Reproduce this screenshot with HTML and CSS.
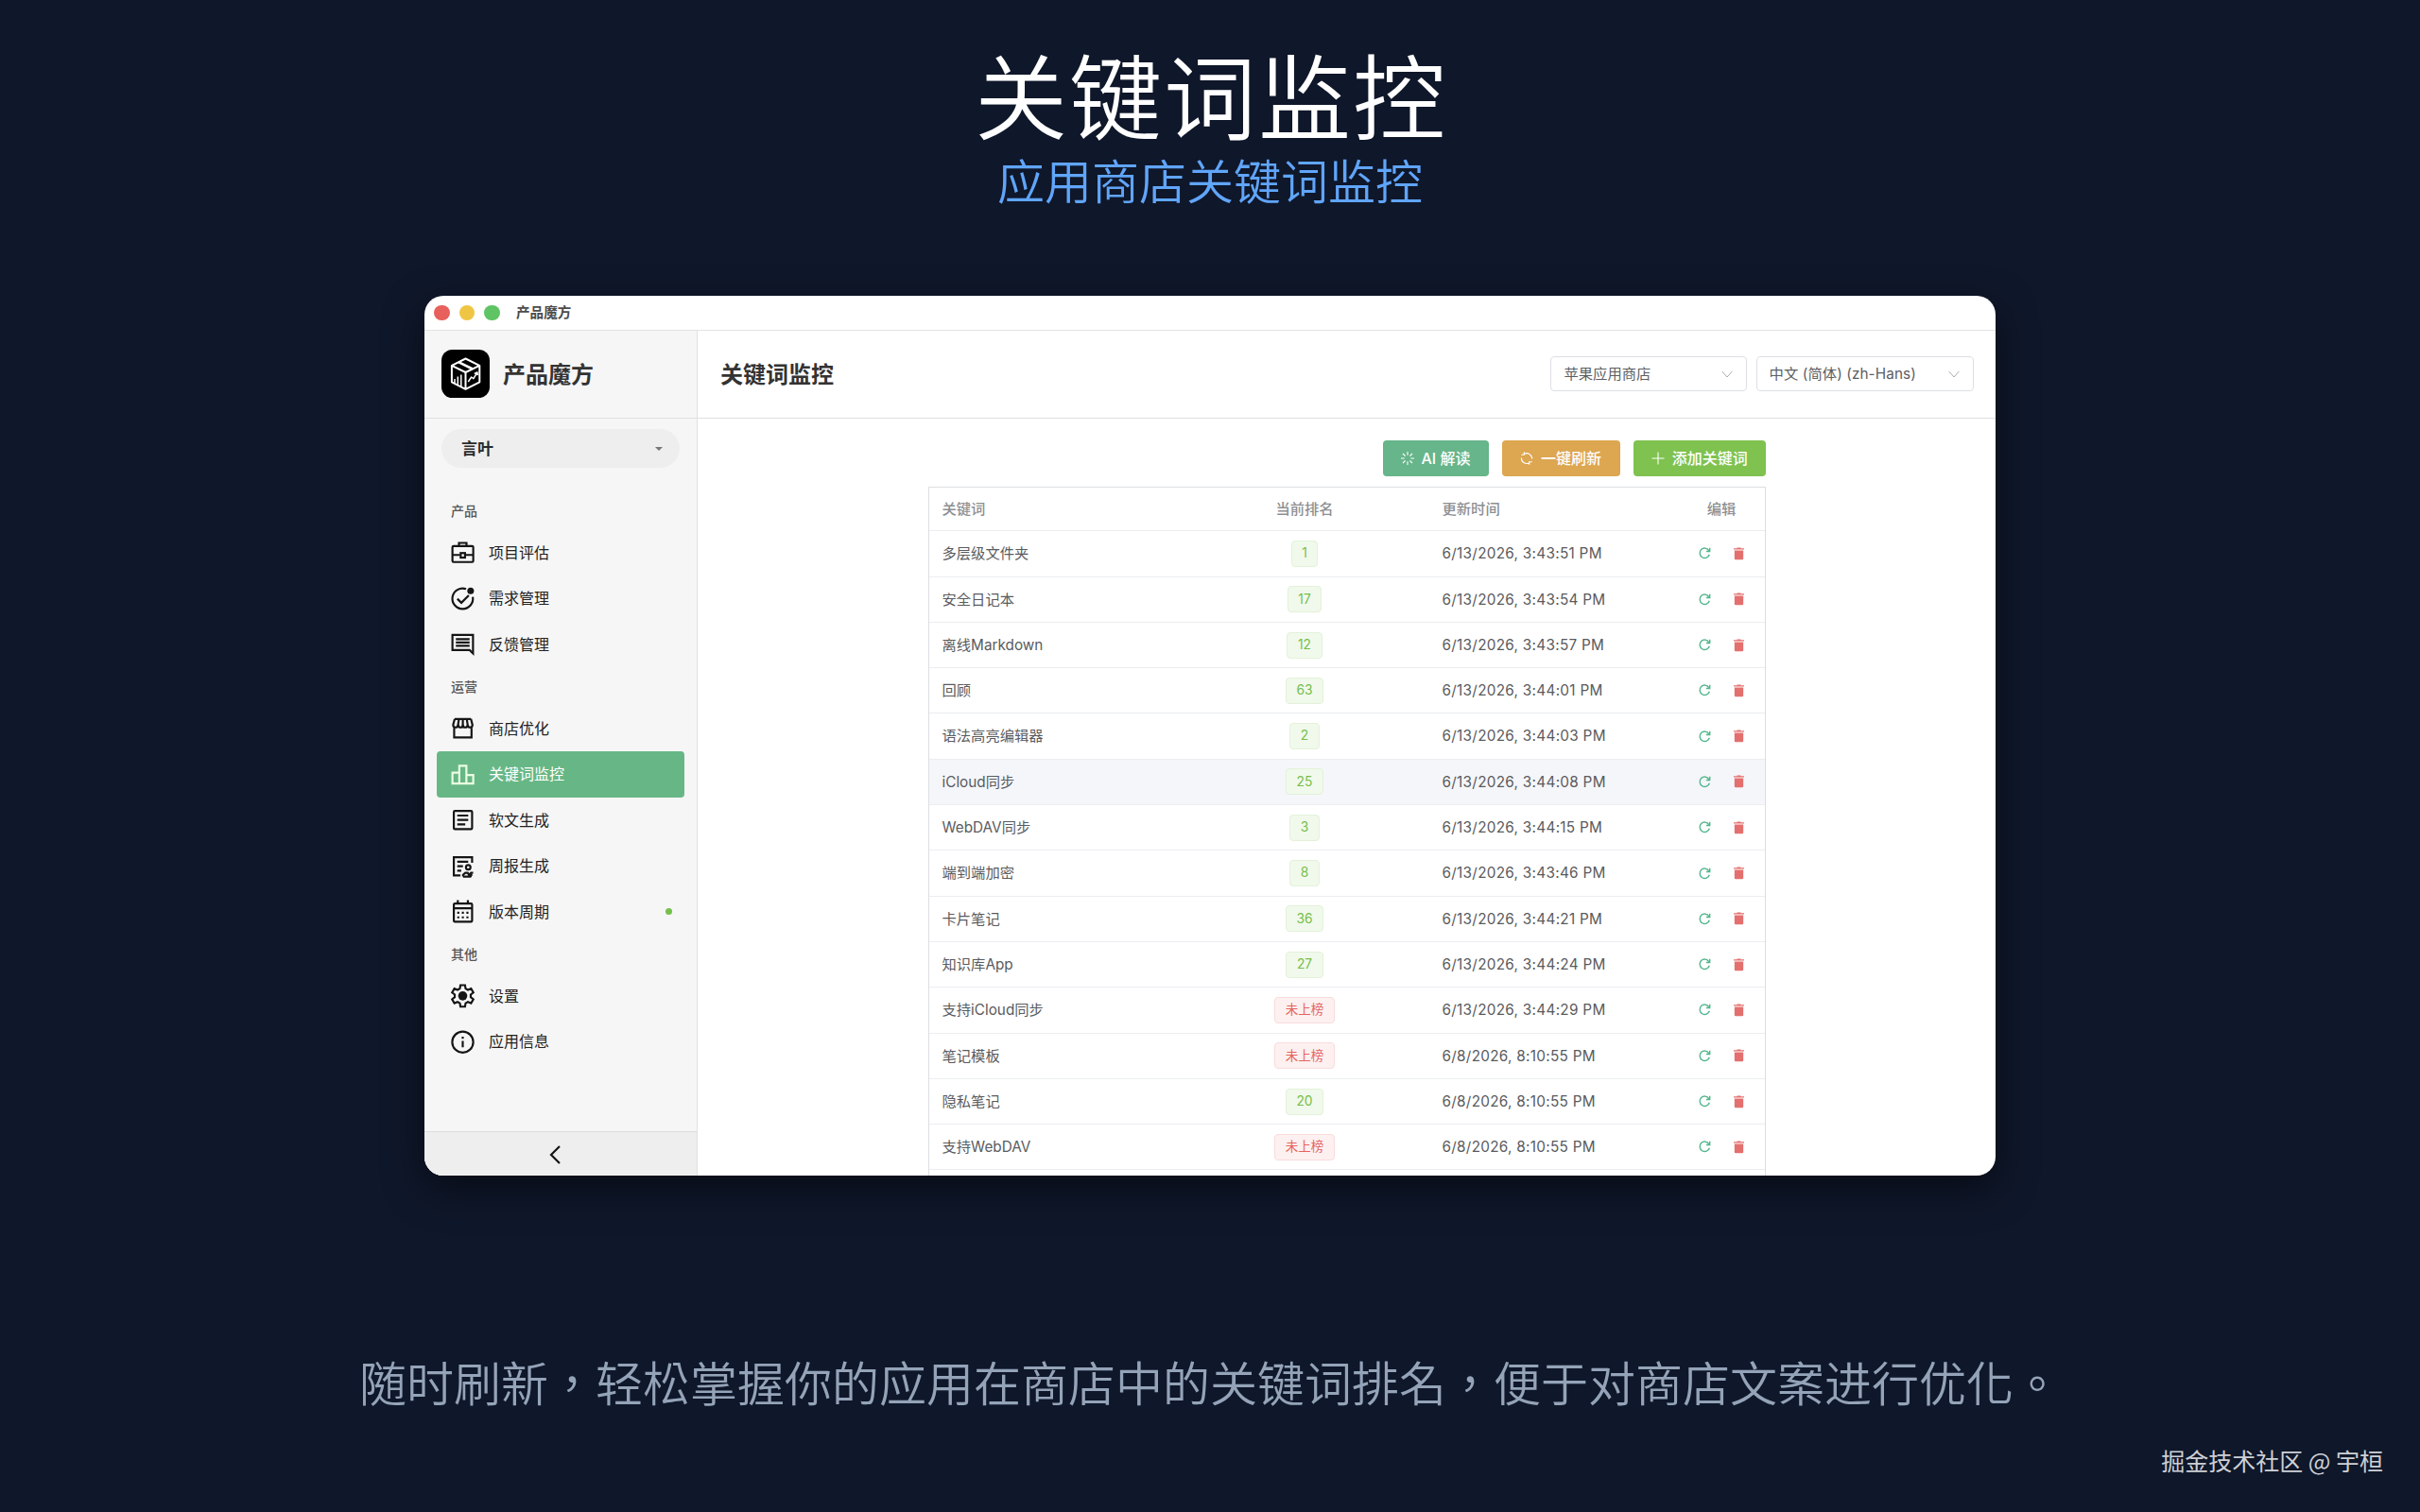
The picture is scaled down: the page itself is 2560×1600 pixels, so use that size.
FILE: index.html
```html
<!DOCTYPE html>
<html lang="zh-CN">
<head>
<meta charset="utf-8">
<title>关键词监控</title>
<link rel="stylesheet" href="styles.css">
</head>
<body>
<svg class="defs" aria-hidden="true">
  <symbol id="refresh" viewBox="0 0 14 14"><path d="M12.2 8.3A5.6 5.6 0 1 1 11.6 3.8M12.6 .9V4.9H8.6" fill="none" stroke="currentColor" stroke-width="1.5"/></symbol>
  <symbol id="trash" viewBox="0 0 12 15"><path d="M3.8 .4h4.4v.9H12v1.3H0V1.3h3.8z"/><path d="M.9 3.6h10.2v9.4a1.3 1.3 0 0 1-1.3 1.3H2.2A1.3 1.3 0 0 1 .9 13z"/></symbol>
  <symbol id="down" viewBox="0 0 12 8"><path d="M.7 1 6 7l5.3-6" fill="none" stroke="currentColor"/></symbol>
</svg>
<main class="page">
  <header class="hero">
    <h1>关键词监控</h1>
    <h2>应用商店关键词监控</h2>
  </header>

  <section class="window">
    <div class="titlebar"><i class="dot red"></i><i class="dot yellow"></i><i class="dot green"></i><span>产品魔方</span></div>
    <div class="body">
      <aside class="sidebar">
        <div class="brand">
          <svg class="logo" viewBox="0 0 51 51"><rect width="51" height="51" rx="11.5"/><g fill="none" stroke="#fff" stroke-width="2" stroke-linejoin="round"><path d="M25.5 9.5 40.3 16.8V34.3L25.5 41.8 10.9 34.3V16.8zM10.9 16.8 25.5 24 40.3 16.8M25.5 24V41.8"/><path d="M18 13.2 33 20.5" stroke-width="2.6"/><path d="M14 35.5V31M17.3 37.3V28.5M20.8 39V26.5M28.3 34l3.4-5 2.2 1.6 3.8-6.3M34.8 25.4l3.1-1.5.4 3.2" stroke-width="1.5"/></g></svg>
          <strong>产品魔方</strong>
        </div>
        <div class="picker"><span>言叶</span><i class="caret"></i></div>
        <nav>
          <p class="label">产品</p>
          <a class="item"><svg viewBox="0 0 24 24"><rect x="3" y="6.5" width="18.2" height="14" rx="1"/><path d="M8.7 6V3.7h6.6V6M3 14.3h6.5M14.5 14.3h6.5"/><rect x="10.2" y="12.6" width="3.8" height="4"/></svg>项目评估</a>
          <a class="item"><svg viewBox="0 0 24 24"><path d="M14.9 3.5A9 9 0 1 0 20.8 10.5M7.3 12.1l3.5 3.5 6.5-6.5"/><circle class="solid" cx="18.9" cy="5.2" r="2.9"/></svg>需求管理</a>
          <a class="item"><svg viewBox="0 0 24 24"><path d="M3 4h18v16.2L18 17.3H3zM6 7.8h12M6 10.7h12M6 13.6h12"/></svg>反馈管理</a>
          <p class="label">运营</p>
          <a class="item"><svg viewBox="0 0 24 24"><path d="M4.5 12v8.2h15.2V12M5 4h14.2M5 4 3.6 9c0 3.2 4 3.2 4.3 0L8.7 4M8 9c.3 3.2 4 3.2 4.1 0V4M12.1 9c.2 3.2 3.9 3.2 4.2 0L15.5 4M16.3 9c.3 3.2 4.2 3.2 4.2 0L19.2 4"/></svg>商店优化</a>
          <a class="item active"><svg viewBox="0 0 24 24"><path d="M9 20H3v-9.5h6M15.2 12.5h6V20h-6M9 20V4.5h6.2V20z"/></svg>关键词监控</a>
          <a class="item"><svg viewBox="0 0 24 24"><rect x="4.2" y="4.2" width="16" height="16" rx="1"/><path d="M7.2 8.3h9.6M7.2 12.1h9.6M7.2 16h7"/></svg>软文生成</a>
          <a class="item"><svg viewBox="0 0 24 24"><path d="M10 20.1H4.2V4.2h16v4.8M7.2 8.2h9.6M7.2 12.1h5M7.2 16h3.5"/><circle cx="16.8" cy="13" r="2"/><path d="M12.3 21.2v-1.6l2-1.7h2l1.2 1.8 1.8-1.8h1.8M12.3 21.2h6.4l1.3-2"/></svg>周报生成</a>
          <a class="item"><svg viewBox="0 0 24 24"><rect x="4.2" y="5" width="16" height="16" rx="1"/><path d="M4.2 9.2h16M7.7 2v3M16.5 2v3"/><path d="M7.2 13.2h9.8M7.2 17.2h9.8" stroke-dasharray="1.8 2.2"/></svg>版本周期<i class="badge"></i></a>
          <p class="label">其他</p>
          <a class="item"><svg viewBox="0 0 24 24"><path d="M10 2.9h4l.5 3 2 1.1 2.8-1.1 2 3.4-2.3 1.9v2.2l2.3 1.9-2 3.4-2.8-1.1-2 1.1-.5 3h-4l-.5-3-2-1.1-2.8 1.1-2-3.4L5 13.4V11.2L2.7 9.3l2-3.4L7.5 7l2-1.1z"/><circle class="solid" cx="12" cy="12.3" r="4"/></svg>设置</a>
          <a class="item"><svg viewBox="0 0 24 24"><circle cx="12" cy="12.2" r="9.2"/><path d="M12 11.2v5.6M12 7.4v2"/></svg>应用信息</a>
        </nav>
        <div class="collapse"><svg viewBox="0 0 12 20"><path d="M11 1 2 10l9 9"/></svg></div>
      </aside>

      <section class="main">
        <header class="head">
          <h3>关键词监控</h3>
          <div class="select store">苹果应用商店<svg><use href="#down"/></svg></div>
          <div class="select lang">中文 (简体) (zh-Hans)<svg><use href="#down"/></svg></div>
        </header>
        <div class="content">
          <div class="actions">
            <button class="btn ai"><svg viewBox="0 0 14 14"><path d="M7 0v3.7M7 10.3V14M0 7h3.7M10.3 7H14M2 2l2.6 2.6M9.4 9.4 12 12M2 12l2.6-2.6M9.4 4.6 12 2"/></svg>AI 解读</button>
            <button class="btn all"><svg viewBox="0 0 14 14"><path d="M4.5 2.3A5.6 5.6 0 0 1 12.6 7.5M9.5 11.9A5.6 5.6 0 0 1 1.4 6.5M4.3 .3V3.3H1.3M9.7 13.7V10.7h3"/></svg>一键刷新</button>
            <button class="btn add"><svg viewBox="0 0 14 14"><path d="M7 .5v13M.5 7h13"/></svg>添加关键词</button>
          </div>
          <div class="table">
            <div class="row th"><span>关键词</span><span class="mid">当前排名</span><span>更新时间</span><span class="mid">编辑</span></div>
            <div class="row"><span>多层级文件夹</span><span class="mid"><b class="tag">1</b></span><span>6/13/2026, 3:43:51 PM</span><span class="ops"><svg class="re"><use href="#refresh"/></svg><svg class="rm"><use href="#trash"/></svg></span></div>
            <div class="row"><span>安全日记本</span><span class="mid"><b class="tag">17</b></span><span>6/13/2026, 3:43:54 PM</span><span class="ops"><svg class="re"><use href="#refresh"/></svg><svg class="rm"><use href="#trash"/></svg></span></div>
            <div class="row"><span>离线Markdown</span><span class="mid"><b class="tag">12</b></span><span>6/13/2026, 3:43:57 PM</span><span class="ops"><svg class="re"><use href="#refresh"/></svg><svg class="rm"><use href="#trash"/></svg></span></div>
            <div class="row"><span>回顾</span><span class="mid"><b class="tag">63</b></span><span>6/13/2026, 3:44:01 PM</span><span class="ops"><svg class="re"><use href="#refresh"/></svg><svg class="rm"><use href="#trash"/></svg></span></div>
            <div class="row"><span>语法高亮编辑器</span><span class="mid"><b class="tag">2</b></span><span>6/13/2026, 3:44:03 PM</span><span class="ops"><svg class="re"><use href="#refresh"/></svg><svg class="rm"><use href="#trash"/></svg></span></div>
            <div class="row hover"><span>iCloud同步</span><span class="mid"><b class="tag">25</b></span><span>6/13/2026, 3:44:08 PM</span><span class="ops"><svg class="re"><use href="#refresh"/></svg><svg class="rm"><use href="#trash"/></svg></span></div>
            <div class="row"><span>WebDAV同步</span><span class="mid"><b class="tag">3</b></span><span>6/13/2026, 3:44:15 PM</span><span class="ops"><svg class="re"><use href="#refresh"/></svg><svg class="rm"><use href="#trash"/></svg></span></div>
            <div class="row"><span>端到端加密</span><span class="mid"><b class="tag">8</b></span><span>6/13/2026, 3:43:46 PM</span><span class="ops"><svg class="re"><use href="#refresh"/></svg><svg class="rm"><use href="#trash"/></svg></span></div>
            <div class="row"><span>卡片笔记</span><span class="mid"><b class="tag">36</b></span><span>6/13/2026, 3:44:21 PM</span><span class="ops"><svg class="re"><use href="#refresh"/></svg><svg class="rm"><use href="#trash"/></svg></span></div>
            <div class="row"><span>知识库App</span><span class="mid"><b class="tag">27</b></span><span>6/13/2026, 3:44:24 PM</span><span class="ops"><svg class="re"><use href="#refresh"/></svg><svg class="rm"><use href="#trash"/></svg></span></div>
            <div class="row"><span>支持iCloud同步</span><span class="mid"><b class="tag none">未上榜</b></span><span>6/13/2026, 3:44:29 PM</span><span class="ops"><svg class="re"><use href="#refresh"/></svg><svg class="rm"><use href="#trash"/></svg></span></div>
            <div class="row"><span>笔记模板</span><span class="mid"><b class="tag none">未上榜</b></span><span>6/8/2026, 8:10:55 PM</span><span class="ops"><svg class="re"><use href="#refresh"/></svg><svg class="rm"><use href="#trash"/></svg></span></div>
            <div class="row"><span>隐私笔记</span><span class="mid"><b class="tag">20</b></span><span>6/8/2026, 8:10:55 PM</span><span class="ops"><svg class="re"><use href="#refresh"/></svg><svg class="rm"><use href="#trash"/></svg></span></div>
            <div class="row"><span>支持WebDAV</span><span class="mid"><b class="tag none">未上榜</b></span><span>6/8/2026, 8:10:55 PM</span><span class="ops"><svg class="re"><use href="#refresh"/></svg><svg class="rm"><use href="#trash"/></svg></span></div>
            <div class="row"></div>
          </div>
        </div>
      </section>
    </div>
  </section>

  <p class="caption" lang="zh-TW">随时刷新，轻松掌握你的应用在商店中的关键词排名，便于对商店文案进行优化。</p>
  <footer class="credit">掘金技术社区 @ 宇桓</footer>
</main>
</body>
</html>
```
FILE: styles.css
```css
* { box-sizing: border-box; }
body { margin: 0; }
h1, h2, h3, p { margin: 0; font-weight: inherit; }
svg { display: block; flex: none; }
.defs { display: none; }

.page {
  width: 2560px; height: 1600px; overflow: hidden;
  display: flex; flex-direction: column; align-items: center;
  background: #0f172a;
  font-family: Inter, "Noto Sans CJK SC", sans-serif;
  line-height: 1.4;
}
.hero { height: 313px; flex: none; padding-top: 37px; text-align: center; font-family: "Noto Sans CJK SC", sans-serif; font-weight: 350; }
.hero h1 { font-size: 98px; line-height: 120px; letter-spacing: 2px; text-indent: 2px; color: #fff; }
.hero h2 { margin-top: 2px; font-size: 50px; line-height: 60px; color: #60a5fa; }

.window {
  width: 1662px; height: 931px; flex: none; overflow: hidden;
  display: flex; flex-direction: column;
  border-radius: 20px; background: #fff;
  box-shadow: 0 14px 40px rgba(0, 0, 0, .5);
}
.titlebar {
  height: 37px; flex: none; display: flex; align-items: center; gap: 10px;
  padding-left: 10px; border-bottom: 1px solid #e2e2e2;
  font-size: 14.6px; font-weight: 600; color: #4c4c4c;
}
.titlebar span { margin-left: 7.5px; padding-top: 1px; }
.dot { width: 16.5px; height: 16.5px; border-radius: 50%; }
.red { background: #e8605c; }
.yellow { background: #efc643; }
.green { background: #5fc464; }
.body { flex: 1; min-height: 0; display: flex; }

.sidebar { width: 289px; flex: none; display: flex; flex-direction: column; background: #f6f6f6; border-right: 1px solid #e0e0e0; }
.brand { height: 93px; flex: none; display: flex; align-items: center; gap: 14px; padding: 0 0 1px 18px; border-bottom: 1px solid #e0e0e0; font-size: 24px; color: #333; }
.brand strong { padding-top: 2px; }
.logo { width: 51px; height: 51px; }
.picker {
  height: 41px; flex: none; margin: 11px 18px 25px; padding: 0 18px 0 21px;
  display: flex; align-items: center; justify-content: space-between;
  border-radius: 21px; background: #eee; font-size: 17px; font-weight: 700; color: #2b2b2b;
}
.picker span { padding-top: 2px; }
.caret { border: 4.5px solid transparent; border-top-color: #777; border-bottom-width: 0; }
nav { flex: 1; padding: 0 13px; }
.label { height: 40.5px; line-height: 41.5px; padding-left: 15px; font-size: 14px; font-weight: 500; color: #555; }
.item { height: 48.5px; display: flex; align-items: center; padding-left: 12.5px; border-radius: 4px; font-size: 16px; color: #222; }
.item svg { width: 29px; height: 29px; margin-right: 13.5px; fill: none; stroke: #151515; stroke-width: 1.8; }
.item svg .solid { fill: #151515; stroke: none; }
.item.active { background: #67b786; color: #fff; }
.item.active svg { stroke: #eaffdf; }
.badge { width: 7px; height: 7px; border-radius: 50%; background: #74c04b; margin: 0 13px 0 auto; }
.collapse { height: 47px; flex: none; display: flex; justify-content: center; align-items: center; padding: 1px 12px 0 0; background: #eee; border-top: 1px solid #dcdede; }
.collapse svg { width: 12px; height: 20px; fill: none; stroke: #151515; stroke-width: 2.2; }

.main { flex: 1; min-width: 0; display: flex; flex-direction: column; }
.head { height: 93px; flex: none; display: flex; align-items: center; gap: 10px; padding: 0 23px 1px 24px; border-bottom: 1px solid #dedfe0; }
.head h3 { flex: 1; padding-top: 2px; font-size: 24px; font-weight: 700; color: #333; }
.select { height: 37px; display: flex; align-items: center; justify-content: space-between; padding: 0 14px; border: 1px solid #dcdfe6; border-radius: 4px; font-size: 15.3px; color: #5c5e62; }
.select svg { width: 12px; height: 8px; color: #a8abb2; }
.store { width: 208px; }
.lang { width: 230.5px; padding-left: 13px; letter-spacing: .1px; }
.content { flex: 1; min-height: 0; width: 886px; margin-left: 244px; padding-top: 23px; overflow: hidden; }
.actions { display: flex; justify-content: flex-end; gap: 14px; margin-bottom: 11px; }
.btn { height: 38px; border: 0; padding: 0; display: flex; align-items: center; justify-content: center; gap: 8px; border-radius: 4px; color: #fff; font: 500 16px/1.4 Inter, "Noto Sans CJK SC", sans-serif; }
.btn svg { width: 14px; height: 14px; fill: none; stroke: #fff; stroke-width: 1.1; }
.ai { width: 112px; background: #67b58a; }
.all { width: 125px; background: #dda650; }
.add { width: 140.5px; background: #7fc24f; }

.table { border: 1px solid #dcdfe2; font-size: 15.3px; color: #5a5b5e; }
.row { height: 48.31px; display: grid; grid-template-columns: 312px 170px 310px 1fr; align-items: center; border-bottom: 1px solid #ebedf0; }
.row > :first-child { padding-left: 13.5px; }
.row > :nth-child(3) { padding-left: 60.5px; letter-spacing: .29px; }
.row.th > :nth-child(3) { letter-spacing: 0; }
.th { height: 46.3px; color: #8d8f93; font-weight: 500; }
.hover { background: #f5f6fa; }
.mid { display: flex; justify-content: center; }
.tag { height: 28px; display: flex; align-items: center; padding: 0 10.5px; border: 1px solid #e2f2d8; border-radius: 4px; background: #f1f9ec; color: #76be4a; font-size: 13.8px; font-weight: 400; }
.tag.none { border-color: #f9dcdc; background: #fdf0f0; color: #e46460; font-size: 13.5px; }
.ops { display: flex; align-items: center; justify-content: center; gap: 24px; }
.re { width: 13px; height: 13px; color: #52b68c; }
.rm { width: 11px; height: 14px; fill: #e3706e; }

.caption { margin-top: 181px; font: 350 50px/72px "Noto Sans CJK TC", sans-serif; color: #94a3b8; white-space: nowrap; }
.credit { align-self: flex-end; margin: 30px 39px 0 0; font: 400 25px/37px "Noto Sans CJK SC", sans-serif; color: #cdd0d5; }
```
